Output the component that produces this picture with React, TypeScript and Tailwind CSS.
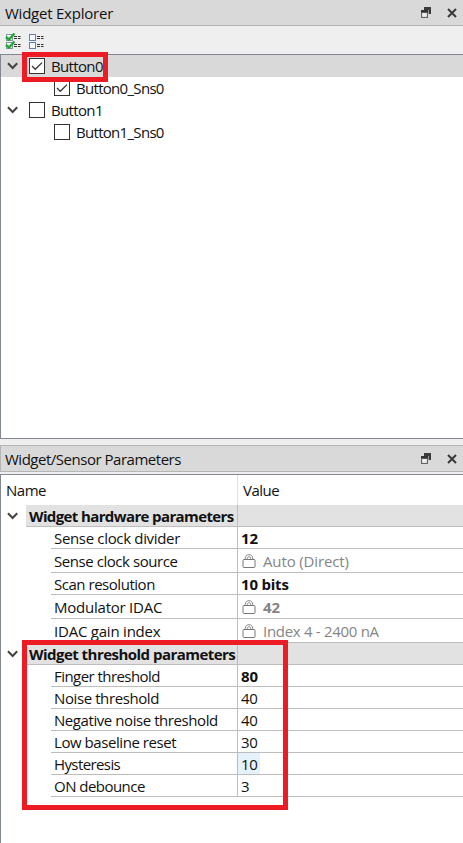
import type { ReactNode } from "react";

function Chevron() {
  return (
    <svg width="13" height="8" viewBox="0 0 13 8" fill="none" className="shrink-0">
      <path d="M2 1.3 6.6 5.9 11.2 1.3" stroke="#444" strokeWidth="2.1" />
    </svg>
  );
}

function CheckBox({ checked }: { checked: boolean }) {
  return (
    <svg width="16" height="16" viewBox="0 0 16 16" fill="none" className="shrink-0">
      <rect x="0.5" y="0.5" width="15" height="15" fill="#fff" stroke="#333" />
      {checked && <path d="M3 8 6.3 11.3 13 4.6" stroke="#333" strokeWidth="1.3" />}
    </svg>
  );
}

function Lock() {
  return (
    <svg width="14" height="15" viewBox="0 0 14 15" fill="none" stroke="#777" className="shrink-0">
      <rect x="1" y="5.5" width="12" height="8" rx="1" />
      <path d="M3.3 5.5V4.3C3.3 2 4.8.7 7 .7s3.7 1.3 3.7 3.6v1.2M5.3 5.5V4.6c0-1.1.6-1.8 1.7-1.8s1.7.7 1.7 1.8v.9" strokeWidth="0.9" />
    </svg>
  );
}

function TitleBar({ children }: { children: ReactNode }) {
  return (
    <div className="flex h-[25px] items-center bg-[#d9d9d9] pr-[6px]">
      <span className="flex-1">{children}</span>
      <svg width="10" height="11" viewBox="0 0 10 11" className="mr-[16px]">
        <path d="M3 0h7v7H8V3H3Z" fill="#3a3a3a" />
        <path d="M4 3h4v4H7V4H4Z" fill="#999" />
        <path d="M0 3h7v8H0ZM1.3 6v3.7h4.4V6Z" fill="#666" fillRule="evenodd" />
        <path d="M0 3h7v2.3H0Z" fill="#333" />
        <path d="M1.3 6h4.4v3.7H1.3Z" fill="#eee" />
      </svg>
      <svg width="10" height="10" viewBox="0 0 10 10">
        <path d="m1 1 8 8M9 1 1 9" stroke="#3a3a3a" strokeWidth="2" />
      </svg>
    </div>
  );
}

function ListIcon({ checked }: { checked: boolean }) {
  return (
    <svg width="16" height="16" viewBox="0 0 16 16" fill="none">
      {[1, 9].map((y) => (
        <g key={y}>
          <rect x="1.5" y={y + 0.5} width="6" height="6" fill="#f4f7fc" stroke={checked ? "#7f9b95" : "#6481ad"} />
          <path d={`M9 ${y + 2.5}h3m1 0h2.5M9 ${y + 4.5}h3m1 0h2.5`} stroke="#333" />
          {checked && <path d={`M1 ${y + 3} 4 ${y + 5.5} 9.5 ${y - 0.5}`} stroke="#27a33b" strokeWidth="2.4" />}
        </g>
      ))}
    </svg>
  );
}

function TreeRow({ label, checked, child, selected }: { label: string; checked: boolean; child?: boolean; selected?: boolean }) {
  return (
    <div className={`flex h-[22px] items-center ${selected ? "bg-[#d9d9d9]" : ""} ${child ? "pl-[53px]" : "pl-[5px]"}`}>
      {!child && <Chevron />}
      <span className={`flex ${child ? "mr-[6px]" : "ml-[10px] mr-[6px]"}`}>
        <CheckBox checked={checked} />
      </span>
      <span className={child ? "tracking-[-0.7px]" : "tracking-[-0.65px]"}>{label}</span>
    </div>
  );
}

function Group({ label, tracking }: { label: string; tracking: string }) {
  return (
    <div className="flex h-[22px]">
      <div className="flex w-[25px] items-center pl-[5px]">
        <Chevron />
      </div>
      <div className={`flex w-[211px] items-center whitespace-nowrap border-b border-[#bdbdbd] bg-[#e2e2e2] pl-[3px] font-bold ${tracking}`}>{label}</div>
      <div className="flex-1 border-b border-l border-[#bdbdbd] bg-[#e2e2e2]" />
    </div>
  );
}

type Param = {
  name: string;
  value: string;
  nameTracking: string;
  valueTracking: string;
  tall?: boolean;
  locked?: boolean;
  bold?: boolean;
  active?: boolean;
};

function ParamRow({ name, value, nameTracking, valueTracking, tall, locked, bold, active }: Param) {
  return (
    <div className={`flex pl-[50px] ${tall ? "h-[24px]" : "h-[22px]"}`}>
      <div className={`flex w-[186px] items-center whitespace-nowrap border-b border-[#bdbdbd] pl-[3px] ${nameTracking}`}>{name}</div>
      <div className="flex flex-1 items-center border-b border-l border-[#bdbdbd]">
        <div
          className={`flex h-full items-center ${locked ? "pl-1 text-[#858585]" : "pl-[3px]"} ${active ? "w-[22px] bg-[#e5f1fb]" : ""} ${bold ? "font-bold" : ""}`}
        >
          {locked && (
            <span className="mr-[7px] flex pt-[2px]">
              <Lock />
            </span>
          )}
          <span className={`whitespace-nowrap ${valueTracking}`}>{value}</span>
        </div>
      </div>
    </div>
  );
}

const hardware: Param[] = [
  { name: "Sense clock divider", value: "12", bold: true, nameTracking: "tracking-[-0.33px]", valueTracking: "tracking-[-0.2px]" },
  { name: "Sense clock source", value: "Auto (Direct)", locked: true, tall: true, nameTracking: "tracking-[-0.44px]", valueTracking: "tracking-[-0.13px]" },
  { name: "Scan resolution", value: "10 bits", bold: true, nameTracking: "tracking-[-0.47px]", valueTracking: "tracking-[-0.2px]" },
  { name: "Modulator IDAC", value: "42", locked: true, bold: true, tall: true, nameTracking: "tracking-[-0.23px]", valueTracking: "tracking-[-0.2px]" },
  { name: "IDAC gain index", value: "Index 4 - 2400 nA", locked: true, tall: true, nameTracking: "tracking-[-0.22px]", valueTracking: "tracking-[-0.3px]" },
];

const thresholds: Param[] = [
  { name: "Finger threshold", value: "80", bold: true, nameTracking: "tracking-[-0.55px]", valueTracking: "tracking-[-0.2px]" },
  { name: "Noise threshold", value: "40", nameTracking: "tracking-[-0.4px]", valueTracking: "tracking-[-0.4px]" },
  { name: "Negative noise threshold", value: "40", nameTracking: "tracking-[-0.43px]", valueTracking: "tracking-[-0.4px]" },
  { name: "Low baseline reset", value: "30", nameTracking: "tracking-[-0.44px]", valueTracking: "tracking-[-0.4px]" },
  { name: "Hysteresis", value: "10", active: true, nameTracking: "tracking-[-0.6px]", valueTracking: "tracking-[-0.4px]" },
  { name: "ON debounce", value: "3", nameTracking: "tracking-[-0.53px]", valueTracking: "tracking-[-0.4px]" },
];

export default function App() {
  return (
    <div className="relative flex h-[843px] w-[463px] flex-col overflow-hidden bg-[#efefef] font-['Open_Sans','Noto_Sans',sans-serif] text-[15px] leading-[20px] text-[#111]">
      <div className="bg-[#d9d9d9] pl-[5px] tracking-[-0.23px]">
        <TitleBar>Widget Explorer</TitleBar>
      </div>
      <div className="flex h-[29px] gap-[7px] border-t border-[#b5b5b5] pl-[5px] pt-[7px]">
        <ListIcon checked />
        <ListIcon checked={false} />
      </div>
      <div className="h-[385px] border-y border-l border-[#828790] bg-white">
        <TreeRow label="Button0" checked selected />
        <TreeRow label="Button0_Sns0" checked child />
        <TreeRow label="Button1" checked={false} />
        <TreeRow label="Button1_Sns0" checked={false} child />
      </div>
      <div className="mt-[6px] border-y border-l border-[#b5b5b5] bg-[#d9d9d9] pl-[4px] tracking-[-0.48px]">
        <TitleBar>Widget/Sensor Parameters</TitleBar>
      </div>
      <div className="mt-[2px] flex-1 border-l border-t border-[#828790] bg-white">
        <div className="flex h-[30px] tracking-[-0.48px]">
          <div className="flex w-[236px] items-center pl-[5px]">Name</div>
          <div className="flex flex-1 items-center border-l border-[#e2e2e2] pl-[5px]">Value</div>
        </div>
        <Group label="Widget hardware parameters" tracking="tracking-[-0.62px]" />
        {hardware.map((p) => (
          <ParamRow key={p.name} {...p} />
        ))}
        <Group label="Widget threshold parameters" tracking="tracking-[-0.53px]" />
        {thresholds.map((p) => (
          <ParamRow key={p.name} {...p} />
        ))}
      </div>
      <div className="absolute left-[22px] top-[52px] h-[30px] w-[86px] border-[5px] border-[#ed1c24]" />
      <div className="absolute left-[22px] top-[640px] h-[170px] w-[266px] border-[5px] border-[#ed1c24]" />
    </div>
  );
}
